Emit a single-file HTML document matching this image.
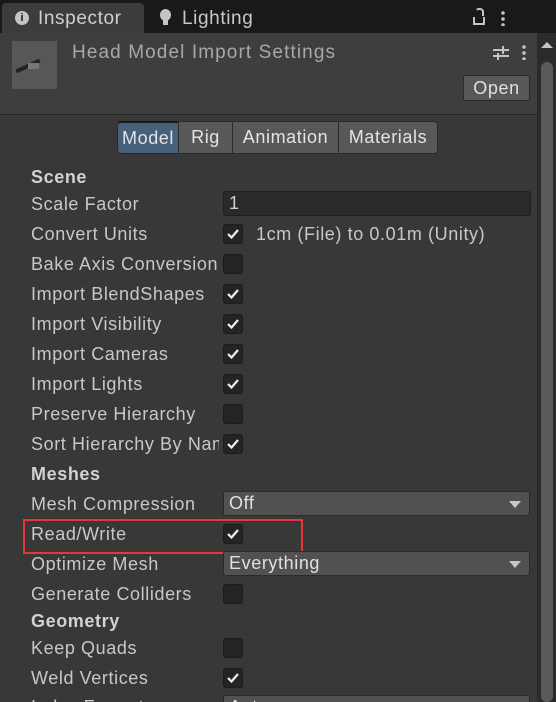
<!DOCTYPE html>
<html><head><style>
*{margin:0;padding:0;box-sizing:border-box}
html,body{width:556px;height:702px;overflow:hidden}
body{background:#383838;font-family:"Liberation Sans",sans-serif;color:#c4c4c4;position:relative;font-size:18px;letter-spacing:0.6px}
.abs{position:absolute}
.tabbar{left:0;top:0;width:556px;height:33px;background:#191919}
.tab1{left:2px;top:3px;width:142px;height:30px;background:#3c3c3c;border-radius:4px 4px 0 0}
.hdr{left:0;top:33px;width:537px;height:82px;background:#3e3e3e;border-bottom:1px solid #262626}
.lbl{position:absolute;left:31px;white-space:nowrap;font-size:18px;line-height:20px;color:#c8c8c8}
.b{font-weight:bold;color:#d2d2d2}
.cb{position:absolute;left:223px;width:20px;height:20px;background:#242424;border:1px solid #1c1c1c;border-radius:3px}
.cb svg{position:absolute;left:2px;top:2px}
.dd{position:absolute;left:223px;width:307px;height:25px;background:#515151;border-radius:3px;border:1px solid #2a2a2a;padding-left:5px;line-height:23px;color:#e0e0e0}
.dd:after{content:"";position:absolute;right:8px;top:9px;border-left:6px solid transparent;border-right:6px solid transparent;border-top:7px solid #c8c8c8}
.btn{position:absolute;top:121px;height:33px;background:#585858;border:1px solid #2a2a2a;color:#e4e4e4;text-align:center;line-height:31px}
</style></head><body>
<div class="abs tabbar"></div>
<div class="abs tab1"></div>
<div class="abs" style="left:15px;top:11px;width:14px;height:14px;border-radius:50%;background:#c4c4c4;color:#191919;font-size:11px;font-weight:bold;text-align:center;line-height:14px;letter-spacing:0">i</div>
<div class="abs" style="left:38px;top:8px;color:#d0d0d0;font-size:19px">Inspector</div>
<div class="abs" style="left:160px;top:9px;width:11px;height:12px;border-radius:50%;background:#c4c4c4"></div>
<div class="abs" style="left:163px;top:20px;width:5px;height:5px;background:#c4c4c4"></div>
<div class="abs" style="left:182px;top:8px;color:#c8c8c8;font-size:19px">Lighting</div>
<div class="abs" style="left:475px;top:8px;width:9px;height:8px;border:2px solid #c4c4c4;border-bottom:none;border-radius:4px 4px 0 0;border-left-color:transparent"></div>
<div class="abs" style="left:473px;top:17px;width:12px;height:8px;border:2px solid #c4c4c4;border-top:none"></div>
<div class="abs" style="left:501px;top:10px;width:4px;height:16px;background:radial-gradient(circle,#c4c4c4 1.6px,transparent 2px) 0 0/4px 6px"></div>
<div class="abs hdr"></div>
<div class="abs" style="left:12px;top:41px;width:45px;height:48px;background:#575757"></div>
<div class="abs" style="left:15px;top:64px;width:26px;height:4px;background:#222;transform:rotate(-25deg)"></div>
<div class="abs" style="left:28px;top:63px;width:11px;height:6px;background:#777"></div>
<div class="abs" style="left:72px;top:42px;font-size:19px;color:#a8a8a8;letter-spacing:1.1px">Head Model Import Settings</div>
<svg class="abs" style="left:492px;top:44px" width="18" height="18"><path d="M1 6h16M1 12h16M11 2v8M6 9v7" stroke="#c4c4c4" stroke-width="2"/></svg>
<div class="abs" style="left:522px;top:44px;width:4px;height:16px;background:radial-gradient(circle,#c4c4c4 1.6px,transparent 2px) 0 0/4px 6px"></div>
<div class="abs" style="left:463px;top:75px;width:67px;height:26px;background:#585858;border:1px solid #2a2a2a;border-radius:3px;text-align:center;line-height:24px;color:#e0e0e0">Open</div>
<div class="abs" style="left:537px;top:33px;width:19px;height:669px;background:#2b2b2b"></div>
<div class="abs" style="left:541px;top:62px;width:12px;height:640px;background:#5a5a5a;border-radius:6px"></div>
<div class="abs" style="left:541px;top:42px;border-left:6px solid transparent;border-right:6px solid transparent;border-bottom:6px solid #c4c4c4"></div>
<div class="btn" style="left:117px;width:62px;background:#46607c;border-radius:4px 0 0 4px;border-top:2px solid #1a1a1a">Model</div>
<div class="btn" style="left:178px;width:55px">Rig</div>
<div class="btn" style="left:232px;width:107px">Animation</div>
<div class="btn" style="left:338px;width:100px;border-radius:0 4px 4px 0">Materials</div>

<div class="lbl b" style="top:167px">Scene</div>
<div class="lbl" style="top:194px">Scale Factor</div>
<div class="abs" style="left:223px;top:191px;width:308px;height:25px;background:#2a2a2a;border:1px solid #1e1e1e;border-radius:3px;padding-left:5px;line-height:23px;color:#d0d0d0">1</div>
<div class="lbl" style="top:224px">Convert Units</div>
<div class="cb" style="top:224px"><svg width="14" height="14"><path d="M2 7l3.5 3.5L12 3" stroke="#eee" stroke-width="2.2" fill="none"/></svg></div>
<div class="lbl" style="left:256px;top:224px">1cm (File) to 0.01m (Unity)</div>
<div class="lbl" style="top:254px;width:190px;overflow:hidden">Bake Axis Conversion</div>
<div class="cb" style="top:254px"></div>
<div class="lbl" style="top:284px">Import BlendShapes</div>
<div class="cb" style="top:284px"><svg width="14" height="14"><path d="M2 7l3.5 3.5L12 3" stroke="#eee" stroke-width="2.2" fill="none"/></svg></div>
<div class="lbl" style="top:314px">Import Visibility</div>
<div class="cb" style="top:314px"><svg width="14" height="14"><path d="M2 7l3.5 3.5L12 3" stroke="#eee" stroke-width="2.2" fill="none"/></svg></div>
<div class="lbl" style="top:344px">Import Cameras</div>
<div class="cb" style="top:344px"><svg width="14" height="14"><path d="M2 7l3.5 3.5L12 3" stroke="#eee" stroke-width="2.2" fill="none"/></svg></div>
<div class="lbl" style="top:374px">Import Lights</div>
<div class="cb" style="top:374px"><svg width="14" height="14"><path d="M2 7l3.5 3.5L12 3" stroke="#eee" stroke-width="2.2" fill="none"/></svg></div>
<div class="lbl" style="top:404px">Preserve Hierarchy</div>
<div class="cb" style="top:404px"></div>
<div class="lbl" style="top:434px;width:188px;overflow:hidden">Sort Hierarchy By Name</div>
<div class="cb" style="top:434px"><svg width="14" height="14"><path d="M2 7l3.5 3.5L12 3" stroke="#eee" stroke-width="2.2" fill="none"/></svg></div>
<div class="lbl b" style="top:464px">Meshes</div>
<div class="lbl" style="top:494px">Mesh Compression</div>
<div class="dd" style="top:491px">Off</div>
<div class="lbl" style="top:524px">Read/Write</div>
<div class="cb" style="top:524px"><svg width="14" height="14"><path d="M2 7l3.5 3.5L12 3" stroke="#eee" stroke-width="2.2" fill="none"/></svg></div>
<div class="abs" style="left:23px;top:519px;width:280px;height:35px;border:2px solid #e8343a"></div>
<div class="lbl" style="top:554px">Optimize Mesh</div>
<div class="dd" style="top:551px">Everything</div>
<div class="lbl" style="top:584px">Generate Colliders</div>
<div class="cb" style="top:584px"></div>
<div class="lbl b" style="top:611px">Geometry</div>
<div class="lbl" style="top:638px">Keep Quads</div>
<div class="cb" style="top:638px"></div>
<div class="lbl" style="top:668px">Weld Vertices</div>
<div class="cb" style="top:668px"><svg width="14" height="14"><path d="M2 7l3.5 3.5L12 3" stroke="#eee" stroke-width="2.2" fill="none"/></svg></div>
<div class="lbl" style="top:697px">Index Format</div>
<div class="dd" style="top:695px">Auto</div>
</body></html>
